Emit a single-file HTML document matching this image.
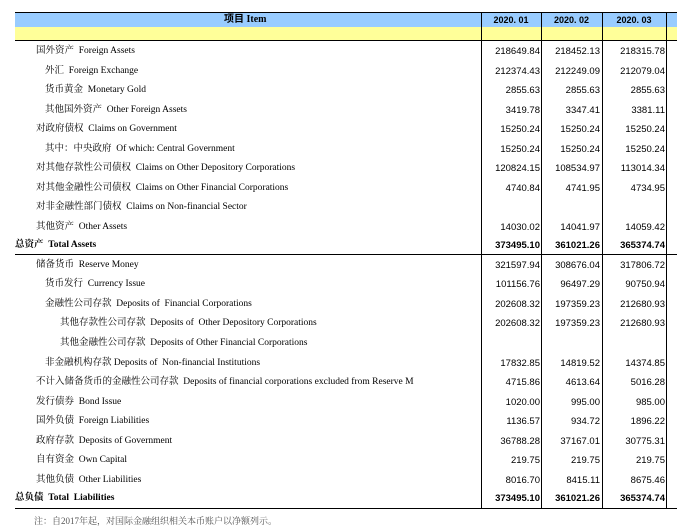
<!DOCTYPE html>
<html><head><meta charset="utf-8"><style>
body{margin:0;width:677px;height:520px;background:#fff;position:relative;overflow:hidden;font-family:"Liberation Serif","Noto Serif CJK SC",serif;font-size:9.5px;color:#000}
.a{position:absolute;white-space:nowrap}
.r{position:absolute;height:19.5px;line-height:19.5px;left:0;width:677px}
.r span{position:absolute;white-space:nowrap}
.n{font-family:"Liberation Sans",sans-serif;font-size:9.5px;text-align:right}
.c1{right:137px}.c2{right:77px}.c3{right:12px}
.b{font-weight:bold}
.vl{position:absolute;top:12px;width:1px;background:#000;height:497px}
</style></head><body>
<div class="a" style="left:15px;top:12px;width:662px;height:15px;background:#99ccff;border-top:1px solid #000"></div>
<div class="a" style="left:15px;top:27px;width:662px;height:13px;background:#ffff99;border-bottom:1px solid #000"></div>
<div class="a b" style="left:224px;top:13px;line-height:14px;font-size:10px;font-family:'Liberation Serif','Noto Sans CJK SC',serif">项目 Item</div>
<div class="a b n" style="left:481px;width:60px;text-align:center;top:13px;line-height:14px;font-size:9px">2020. 01</div>
<div class="a b n" style="left:541px;width:61px;text-align:center;top:13px;line-height:14px;font-size:9px">2020. 02</div>
<div class="a b n" style="left:602px;width:64px;text-align:center;top:13px;line-height:14px;font-size:9px">2020. 03</div>
<div class="vl" style="left:481px"></div>
<div class="vl" style="left:541px"></div>
<div class="vl" style="left:602px"></div>
<div class="vl" style="left:666px"></div>
<div class="a" style="left:15px;top:254px;width:662px;height:1px;background:#000"></div>
<div class="a" style="left:15px;top:508px;width:662px;height:1px;background:#000"></div>

<div style="position:absolute;top:42px;left:0">
<div class="r" style="top:0"><span style="left:36px">国外资产&nbsp; Foreign Assets</span><span class="n c1">218649.84</span><span class="n c2">218452.13</span><span class="n c3">218315.78</span></div>
<div class="r" style="top:19.5px"><span style="left:45px">外汇&nbsp; Foreign Exchange</span><span class="n c1">212374.43</span><span class="n c2">212249.09</span><span class="n c3">212079.04</span></div>
<div class="r" style="top:39px"><span style="left:45px">货币黄金&nbsp; Monetary Gold</span><span class="n c1">2855.63</span><span class="n c2">2855.63</span><span class="n c3">2855.63</span></div>
<div class="r" style="top:58.5px"><span style="left:45px">其他国外资产&nbsp; Other Foreign Assets</span><span class="n c1">3419.78</span><span class="n c2">3347.41</span><span class="n c3">3381.11</span></div>
<div class="r" style="top:78px"><span style="left:36px">对政府债权&nbsp; Claims on Government</span><span class="n c1">15250.24</span><span class="n c2">15250.24</span><span class="n c3">15250.24</span></div>
<div class="r" style="top:97.5px"><span style="left:45px">其中：中央政府&nbsp; Of which: Central Government</span><span class="n c1">15250.24</span><span class="n c2">15250.24</span><span class="n c3">15250.24</span></div>
<div class="r" style="top:117px"><span style="left:36px">对其他存款性公司债权&nbsp; Claims on Other Depository Corporations</span><span class="n c1">120824.15</span><span class="n c2">108534.97</span><span class="n c3">113014.34</span></div>
<div class="r" style="top:136.5px"><span style="left:36px">对其他金融性公司债权&nbsp; Claims on Other Financial Corporations</span><span class="n c1">4740.84</span><span class="n c2">4741.95</span><span class="n c3">4734.95</span></div>
<div class="r" style="top:156px"><span style="left:36px">对非金融性部门债权&nbsp; Claims on Non-financial Sector</span></div>
<div class="r" style="top:175.5px"><span style="left:36px">其他资产&nbsp; Other Assets</span><span class="n c1">14030.02</span><span class="n c2">14041.97</span><span class="n c3">14059.42</span></div>
<div class="r b" style="top:194px"><span style="left:15px">总资产&nbsp; Total Assets</span><span class="n c1">373495.10</span><span class="n c2">361021.26</span><span class="n c3">365374.74</span></div>
<div class="r" style="top:213.5px"><span style="left:36px">储备货币&nbsp; Reserve Money</span><span class="n c1">321597.94</span><span class="n c2">308676.04</span><span class="n c3">317806.72</span></div>
<div class="r" style="top:233px"><span style="left:45px">货币发行&nbsp; Currency Issue</span><span class="n c1">101156.76</span><span class="n c2">96497.29</span><span class="n c3">90750.94</span></div>
<div class="r" style="top:252.5px"><span style="left:45px">金融性公司存款&nbsp; Deposits of&nbsp; Financial Corporations</span><span class="n c1">202608.32</span><span class="n c2">197359.23</span><span class="n c3">212680.93</span></div>
<div class="r" style="top:272px"><span style="left:60px">其他存款性公司存款&nbsp; Deposits of&nbsp; Other Depository Corporations</span><span class="n c1">202608.32</span><span class="n c2">197359.23</span><span class="n c3">212680.93</span></div>
<div class="r" style="top:291.5px"><span style="left:60px">其他金融性公司存款&nbsp; Deposits of Other Financial Corporations</span></div>
<div class="r" style="top:311.5px"><span style="left:45px">非金融机构存款 Deposits of&nbsp; Non-financial Institutions</span><span class="n c1">17832.85</span><span class="n c2">14819.52</span><span class="n c3">14374.85</span></div>
<div class="r" style="top:331px"><span style="left:36px">不计入储备货币的金融性公司存款&nbsp; Deposits of financial corporations excluded from Reserve M</span><span class="n c1">4715.86</span><span class="n c2">4613.64</span><span class="n c3">5016.28</span></div>
<div class="r" style="top:350.5px"><span style="left:36px">发行债券&nbsp; Bond Issue</span><span class="n c1">1020.00</span><span class="n c2">995.00</span><span class="n c3">985.00</span></div>
<div class="r" style="top:370px"><span style="left:36px">国外负债&nbsp; Foreign Liabilities</span><span class="n c1">1136.57</span><span class="n c2">934.72</span><span class="n c3">1896.22</span></div>
<div class="r" style="top:389.5px"><span style="left:36px">政府存款&nbsp; Deposits of Government</span><span class="n c1">36788.28</span><span class="n c2">37167.01</span><span class="n c3">30775.31</span></div>
<div class="r" style="top:409px"><span style="left:36px">自有资金&nbsp; Own Capital</span><span class="n c1">219.75</span><span class="n c2">219.75</span><span class="n c3">219.75</span></div>
<div class="r" style="top:428.5px"><span style="left:36px">其他负债&nbsp; Other Liabilities</span><span class="n c1">8016.70</span><span class="n c2">8415.11</span><span class="n c3">8675.46</span></div>
<div class="r b" style="top:447px"><span style="left:15px">总负债&nbsp; Total&nbsp; Liabilities</span><span class="n c1">373495.10</span><span class="n c2">361021.26</span><span class="n c3">365374.74</span></div>
</div>
<div class="a" style="left:34px;top:514px;color:#555;font-size:9px">注：自2017年起，对国际金融组织相关本币账户以净额列示。</div>
</body></html>
